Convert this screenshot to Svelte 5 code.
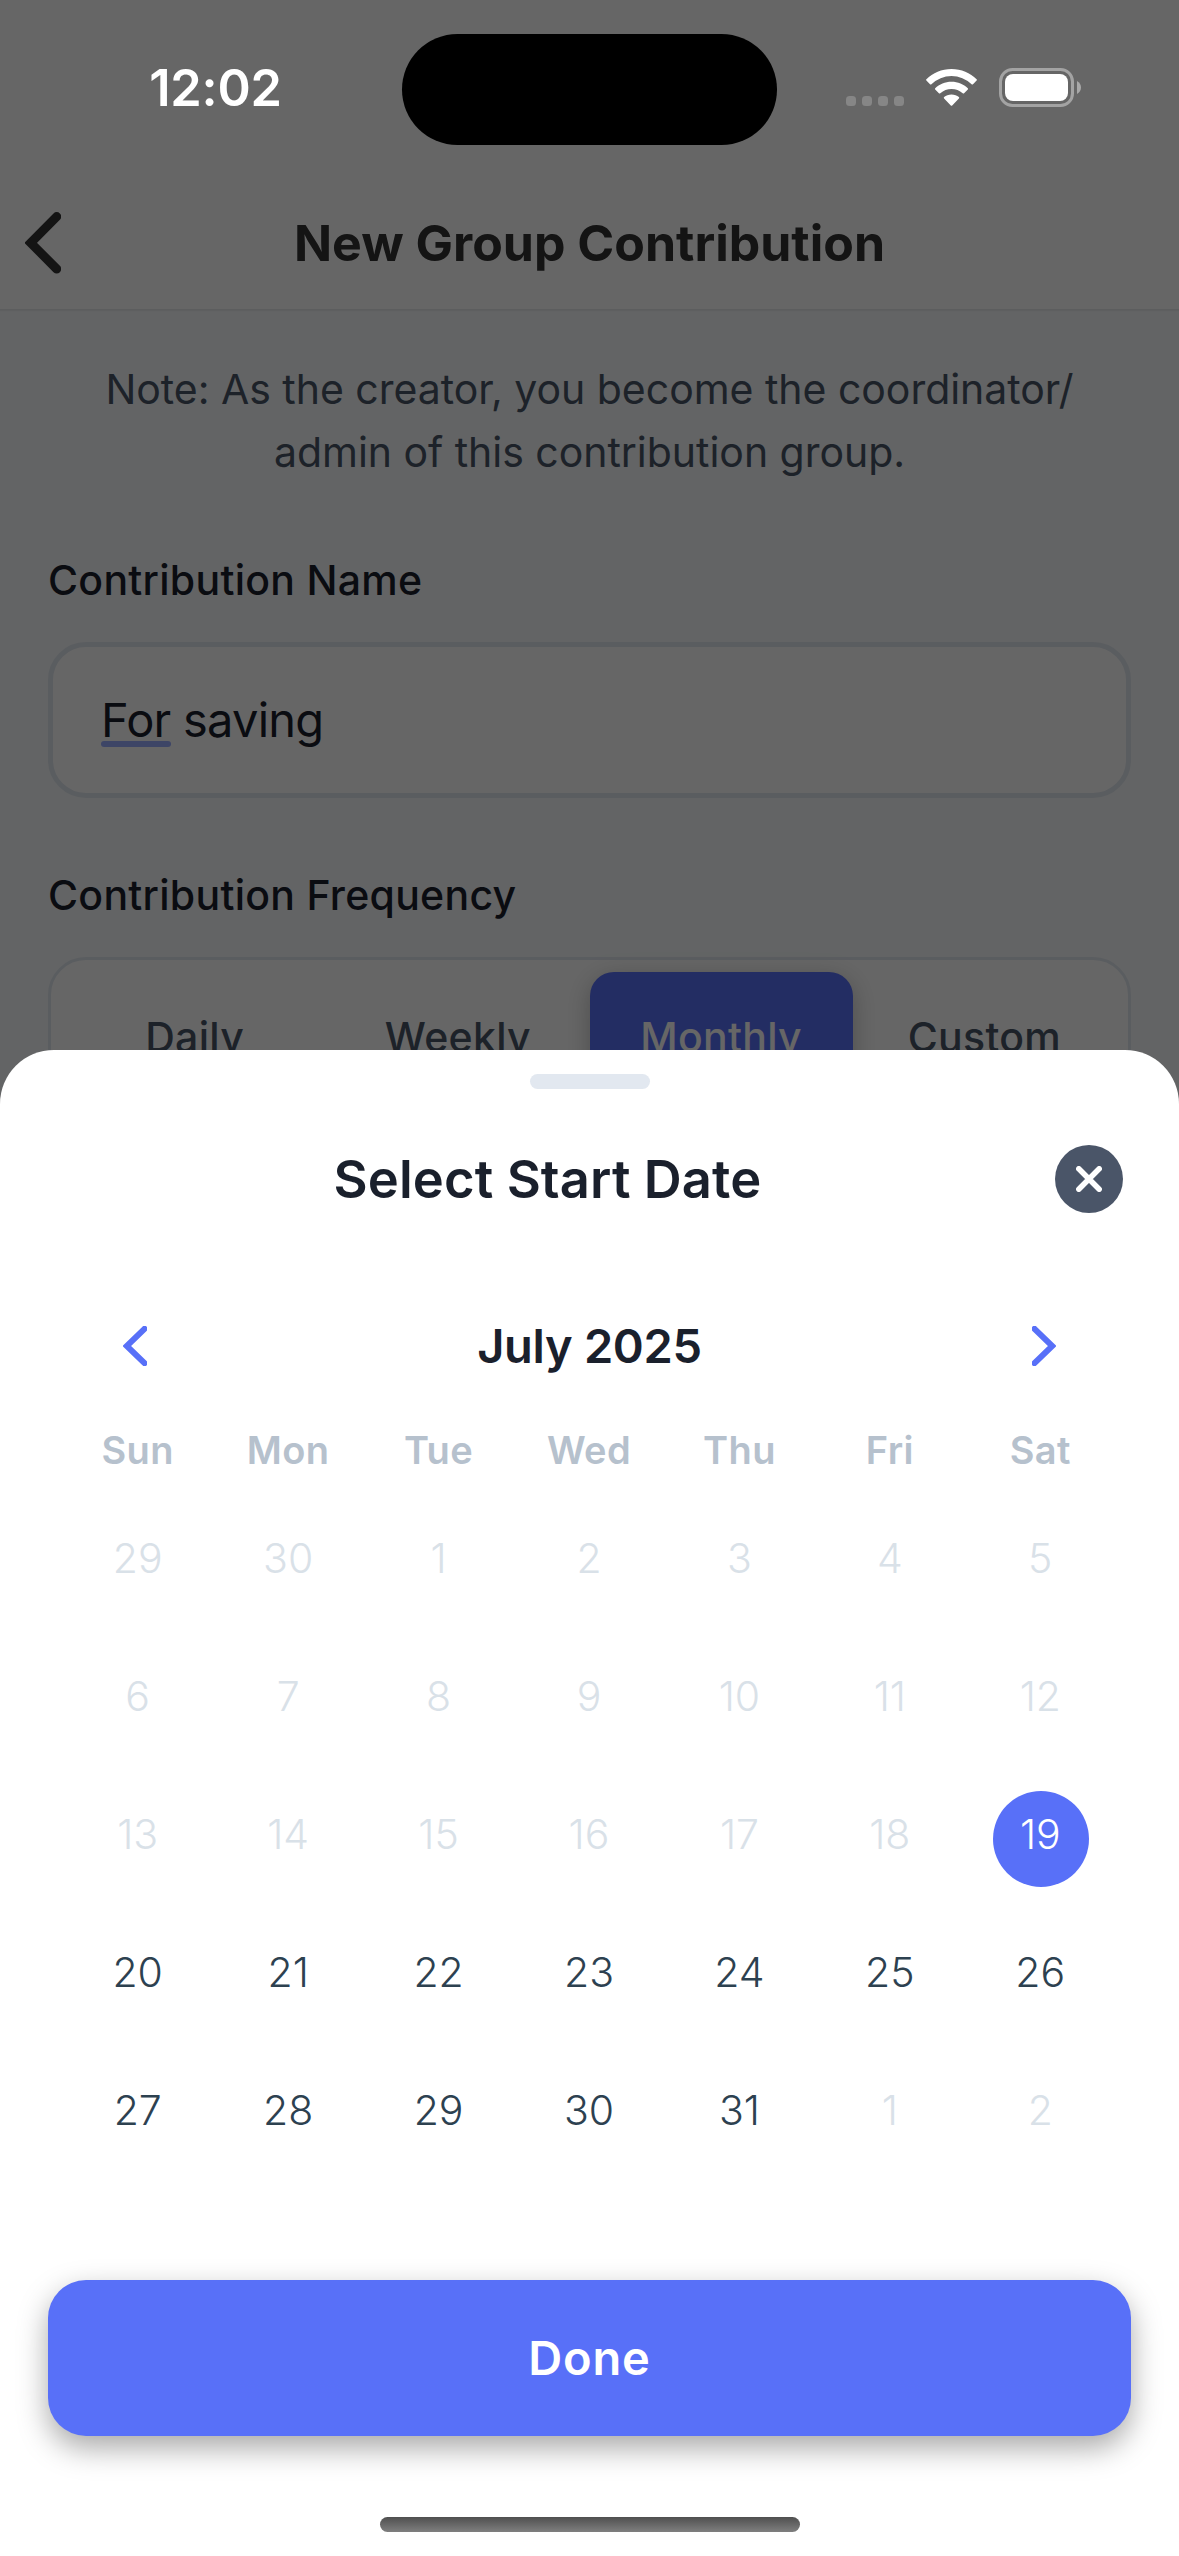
<script lang="ts">
  /**
   * New Group Contribution screen with the start date picker sheet open.
   */

  type Day = { label: number; state: 'muted' | 'active' | 'selected' };

  const frequencies = ['Daily', 'Weekly', 'Monthly', 'Custom'];
  const weekdays = ['Sun', 'Mon', 'Tue', 'Wed', 'Thu', 'Fri', 'Sat'];

  let frequency = $state('Monthly');
  let selected = $state(19);

  // First date that can still be picked in July 2025
  const minDate = 19;

  const days: Day[] = $derived([
    ...[29, 30].map((label): Day => ({ label, state: 'muted' })),
    ...Array.from({ length: 31 }, (_, i): Day => {
      const label = i + 1;
      if (label === selected) return { label, state: 'selected' };
      return { label, state: label < minDate ? 'muted' : 'active' };
    }),
    ...[1, 2].map((label): Day => ({ label, state: 'muted' }))
  ]);

  function pick(day: Day) {
    if (day.state === 'active') selected = day.label;
  }
</script>

<div class="screen">
  <div class="page">
    <header class="nav">
      <svg class="nav-back" viewBox="0 0 36 62" aria-hidden="true">
        <path d="M31.700 4.600 L5.700 30.800 L31.700 57" />
      </svg>
      <h1 class="nav-title">New Group Contribution</h1>
    </header>

    <main class="form">
      <p class="note">
        Note: As the creator, you become the coordinator/<br />admin of this contribution group.
      </p>

      <div class="label label-name">Contribution Name</div>
      <div class="input"><span class="input-text"><span class="marked">For</span> saving</span></div>

      <div class="label label-frequency">Contribution Frequency</div>
      <div class="segments">
        {#each frequencies as item}
          <button
            class="segment"
            class:segment-active={item === frequency}
            onclick={() => (frequency = item)}
          >
            {item}
          </button>
        {/each}
      </div>
    </main>
  </div>

  <div class="scrim"></div>

  <div class="status">
    <div class="status-time">12:02</div>
    <div class="island"></div>
    <div class="status-icons">
      <div class="cell-dots"><i></i><i></i><i></i><i></i></div>
      <svg class="wifi" viewBox="0 0 51 37" aria-hidden="true">
        <path d="M25.5 0C35.300 0 44.200 3.900 50.600 10.200Q51.200 10.900 50.600 11.600L47 15.200Q46.300 15.800 45.600 15.200A29 29 0 0 0 5.400 15.200Q4.700 15.800 4 15.200L.4 11.600Q-.2 10.900 .4 10.200C6.800 3.900 15.700 0 25.500 0Z" />
        <path d="M25.500 12.700C31.900 12.700 37.600 15.200 41.800 19.200Q42.500 19.900 41.800 20.600L38.100 24.300Q37.400 24.900 36.700 24.300A16.500 16.500 0 0 0 14.300 24.300Q13.600 24.900 12.900 24.300L9.200 20.600Q8.500 19.900 9.200 19.200C13.400 15.200 19.100 12.700 25.500 12.700Z" />
        <path d="M25.500 25.400C28.400 25.400 31 26.400 32.900 28.100Q33.600 28.800 32.900 29.500L26.200 36.400Q25.500 37 24.800 36.400L18.100 29.500Q17.400 28.800 18.100 28.100C20 26.400 22.600 25.400 25.500 25.400Z" />
      </svg>
      <svg class="battery" viewBox="0 0 82 39" aria-hidden="true">
        <rect class="battery-case" x="1.500" y="1.500" width="72" height="36" rx="12" />
        <rect x="6" y="6" width="63" height="27" rx="8" />
        <path class="battery-tip" d="M78 13C80.500 14.200 82 16.700 82 19.500S80.500 24.800 78 26Z" />
      </svg>
    </div>
  </div>

  <section class="sheet">
    <div class="handle"></div>

    <div class="sheet-header">
      <h2 class="sheet-title">Select Start Date</h2>
      <button class="close" aria-label="Close">
        <svg viewBox="0 0 26 26" aria-hidden="true">
          <path d="M2.800 2.800 L23.200 23.200 M23.200 2.800 L2.800 23.200" />
        </svg>
      </button>
    </div>

    <div class="calendar">
      <div class="month">
        <svg class="arrow" viewBox="0 0 24 40" aria-hidden="true">
          <path d="M21.500 2.800 L3.700 20 L21.500 37.200" />
        </svg>
        <span class="month-name">July 2025</span>
        <svg class="arrow" viewBox="0 0 24 40" aria-hidden="true">
          <path d="M2.500 2.800 L20.300 20 L2.500 37.200" />
        </svg>
      </div>

      <div class="weekdays">
        {#each weekdays as name}
          <span>{name}</span>
        {/each}
      </div>

      <div class="days">
        {#each days as day}
          <button class="day day-{day.state}" onclick={() => pick(day)}>{day.label}</button>
        {/each}
      </div>
    </div>

    <button class="done">Done</button>
    <div class="home-indicator"></div>
  </section>
</div>

<style>
  :global(body) {
    margin: 0;
  }

  .screen {
    position: relative;
    width: 1179px;
    height: 2556px;
    overflow: hidden;
    background: #f7fafc;
    font-family: Inter, 'Liberation Sans', sans-serif;
    color: #1a202c;
  }

  button {
    margin: 0;
    padding: 0;
    border: none;
    background: none;
    font: inherit;
    color: inherit;
  }

  /* Navigation bar */
  .nav {
    box-sizing: border-box;
    display: grid;
    grid-template-columns: 36px 1fr 36px;
    align-items: center;
    height: 310px;
    padding: 177px 25px 0;
    border-bottom: 1px solid #e6e8ea;
    background: #fff;
    box-shadow: 0 1px 1px rgba(0, 0, 0, 0.05);
  }

  .nav-back {
    width: 36px;
    height: 62px;
    fill: none;
    stroke: #333;
    stroke-width: 9;
    stroke-linecap: round;
    stroke-linejoin: miter;
  }

  .nav-title {
    margin: 0;
    font-size: 50px;
    font-weight: 700;
    line-height: 60px;
    text-align: center;
    white-space: nowrap;
    color: #333;
  }

  /* Form */
  .form {
    padding: 48px 48px 0;
  }

  .note {
    margin: 0;
    font-size: 41px;
    line-height: 63px;
    letter-spacing: -0.03px;
    text-align: center;
    white-space: nowrap;
    color: #4a5568;
  }

  .label {
    font-size: 41px;
    font-weight: 500;
    line-height: 60px;
    letter-spacing: 0.28px;
  }

  .label-name {
    margin: 66px 0 32px;
  }

  .label-frequency {
    margin: 67px 0 32px;
  }

  .input {
    box-sizing: border-box;
    display: flex;
    align-items: center;
    height: 156px;
    padding: 0 48px;
    border: 5px solid #e2e8f0;
    border-radius: 38px;
    background: #fff;
  }

  .input-text {
    font-size: 47px;
    line-height: 60px;
    letter-spacing: -0.75px;
  }

  .marked {
    position: relative;
  }

  .marked::after {
    content: '';
    position: absolute;
    left: 0;
    right: 0;
    bottom: 1px;
    height: 6px;
    border-radius: 3px;
    background: #99acff;
  }

  .segments {
    display: flex;
    padding: 12px;
    border: 3px solid #e2e8f0;
    border-radius: 38px;
    background: #fff;
  }

  .segment {
    flex: 1;
    height: 130px;
    border-radius: 24px;
    font-size: 41px;
    font-weight: 500;
    letter-spacing: 0.28px;
    color: #4a5568;
  }

  .segment-active {
    background: #5870f8;
    color: #fff;
    box-shadow: 0 6px 24px rgba(0, 0, 0, 0.25);
  }

  .scrim {
    position: absolute;
    inset: 0;
    background: rgba(0, 0, 0, 0.6);
  }

  /* Status bar, drawn above the scrim */
  .status {
    position: absolute;
    top: 0;
    left: 0;
    right: 0;
    display: grid;
    grid-template-columns: 402px 375px 1fr;
    align-items: center;
    height: 178px;
  }

  .status-time {
    padding: 0 0 3px 29px;
    font-size: 50.5px;
    font-weight: 600;
    letter-spacing: -0.2px;
    text-align: center;
    color: #fff;
  }

  .island {
    height: 111px;
    border-radius: 56px;
    background: #000;
  }

  .status-icons {
    display: flex;
    align-items: center;
    padding: 0 0 3px 69px;
    fill: #fff;
  }

  .cell-dots {
    display: flex;
    gap: 6px;
    padding-top: 27px;
  }

  .cell-dots i {
    width: 10px;
    height: 10px;
    border-radius: 3.5px;
    background: #868686;
  }

  .wifi {
    width: 51px;
    height: 37px;
    margin-left: 22px;
  }

  .battery {
    width: 82px;
    height: 39px;
    margin-left: 22px;
  }

  .battery-case {
    fill: none;
    stroke: #a3a3a3;
    stroke-width: 3;
  }

  .battery-tip {
    fill: #a8a8a8;
  }

  /* Bottom sheet */
  .sheet {
    position: absolute;
    left: 0;
    right: 0;
    bottom: 0;
    box-sizing: border-box;
    display: flex;
    flex-direction: column;
    height: 1506px;
    padding-top: 24px;
    border-radius: 54px 54px 0 0;
    background: #fff;
  }

  .handle {
    align-self: center;
    width: 120px;
    height: 15px;
    border-radius: 8px;
    background: #e2e8f0;
  }

  .sheet-header {
    display: flex;
    align-items: center;
    margin-top: 56px;
    padding: 0 56px 0 40px;
  }

  .sheet-title {
    flex: 1;
    margin: 0;
    font-size: 52.5px;
    font-weight: 600;
    line-height: 68px;
    letter-spacing: 0.1px;
    text-align: center;
  }

  .close {
    display: flex;
    align-items: center;
    justify-content: center;
    width: 68px;
    height: 68px;
    border-radius: 50%;
    background: #4a5568;
  }

  .close svg {
    width: 26px;
    height: 26px;
    stroke: #fff;
    stroke-width: 5.5;
    stroke-linecap: round;
  }

  .calendar {
    margin-top: 103px;
    padding: 0 63px;
  }

  .month {
    display: flex;
    align-items: center;
    justify-content: space-between;
    height: 60px;
    padding: 0 60px;
  }

  .month-name {
    padding-bottom: 2px;
    font-size: 47px;
    font-weight: 600;
    letter-spacing: -0.3px;
  }

  .arrow {
    width: 24px;
    height: 40px;
    fill: none;
    stroke: #5870f8;
    stroke-width: 6;
    stroke-linecap: round;
    stroke-linejoin: miter;
  }

  .weekdays,
  .days {
    display: grid;
    grid-template-columns: repeat(7, 1fr);
    justify-items: center;
  }

  .weekdays {
    margin-top: 50px;
    font-size: 38px;
    font-weight: 600;
    line-height: 48px;
    letter-spacing: 0.4px;
    color: #b6c1cd;
  }

  .weekdays span {
    padding-right: 1px;
  }

  .days {
    row-gap: 42px;
    margin-top: 41px;
  }

  .day {
    width: 96px;
    height: 96px;
    padding: 0 1px 11px 0;
    border-radius: 50%;
    font-size: 41px;
    font-weight: 300;
    color: #2d4150;
  }

  .day-muted {
    color: #d9e1e8;
  }

  .day-selected {
    background: #5870f8;
    color: #fff;
  }

  .done {
    height: 156px;
    margin: 117px 48px 0;
    padding-bottom: 2px;
    border-radius: 38px;
    background: #5870f8;
    font-size: 47px;
    font-weight: 600;
    letter-spacing: 0.8px;
    color: #fff;
    box-shadow: 0 12px 30px rgba(0, 0, 0, 0.34);
  }

  .home-indicator {
    align-self: center;
    width: 420px;
    height: 15px;
    margin-top: 81px;
    border-radius: 8px;
    background: linear-gradient(#4f4f4f, #7f7f7f);
  }
</style>
